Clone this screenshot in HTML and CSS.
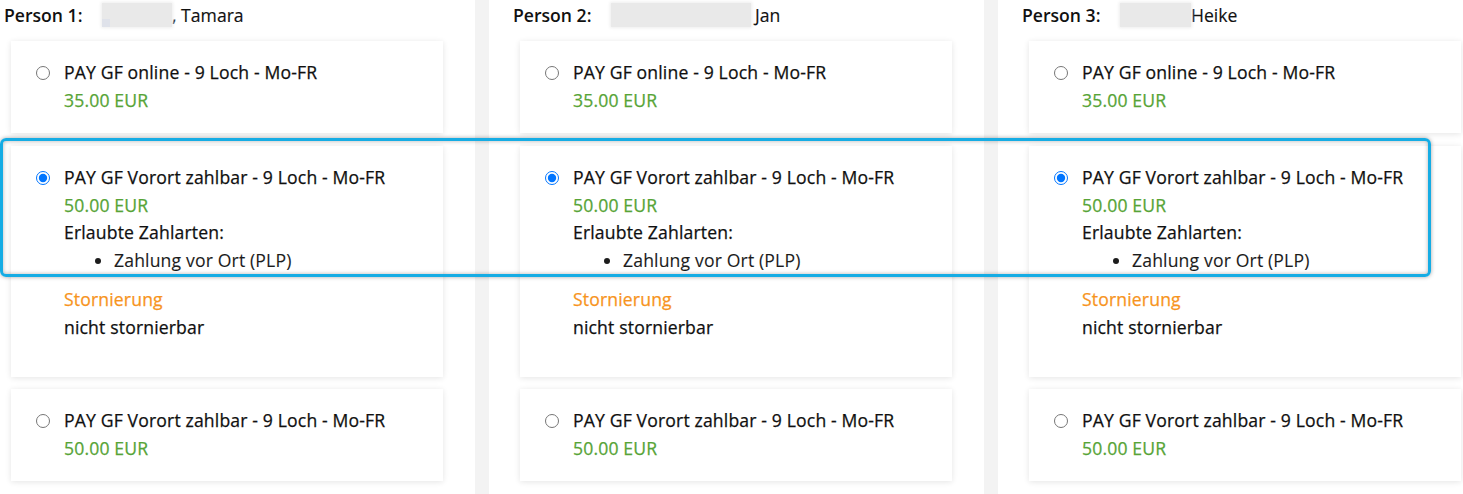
FILE: index.html
```html
<!DOCTYPE html>
<html lang="de">
<head>
<meta charset="utf-8">
<title>Tarifauswahl</title>
<link rel="stylesheet" href="styles.css">
</head>
<body>
<div class="board">
  <section class="col">
    <h2 class="person"><span class="label">Person 1:</span><span class="blur blur-1"><span class="blur-dot"></span></span><span class="name">, Tamara</span></h2>
    <div class="card">
      <input type="radio" name="p1" class="radio">
      <div class="body">
        <div class="title">PAY GF online - 9 Loch - Mo-FR</div>
        <div class="price">35.00 EUR</div>
      </div>
    </div>
    <div class="card">
      <input type="radio" name="p1" class="radio" checked>
      <div class="body">
        <div class="title">PAY GF Vorort zahlbar - 9 Loch - Mo-FR</div>
        <div class="price">50.00 EUR</div>
        <div class="methods">Erlaubte Zahlarten:</div>
        <ul class="method-list"><li>Zahlung vor Ort (PLP)</li></ul>
        <div class="storno">Stornierung</div>
        <div class="storno-text">nicht stornierbar</div>
      </div>
    </div>
    <div class="card">
      <input type="radio" name="p1" class="radio">
      <div class="body">
        <div class="title">PAY GF Vorort zahlbar - 9 Loch - Mo-FR</div>
        <div class="price">50.00 EUR</div>
      </div>
    </div>
  </section>
  <div class="sep"></div>
  <section class="col">
    <h2 class="person"><span class="label">Person 2:</span><span class="blur blur-2"></span><span class="name">Jan</span></h2>
    <div class="card">
      <input type="radio" name="p2" class="radio">
      <div class="body">
        <div class="title">PAY GF online - 9 Loch - Mo-FR</div>
        <div class="price">35.00 EUR</div>
      </div>
    </div>
    <div class="card">
      <input type="radio" name="p2" class="radio" checked>
      <div class="body">
        <div class="title">PAY GF Vorort zahlbar - 9 Loch - Mo-FR</div>
        <div class="price">50.00 EUR</div>
        <div class="methods">Erlaubte Zahlarten:</div>
        <ul class="method-list"><li>Zahlung vor Ort (PLP)</li></ul>
        <div class="storno">Stornierung</div>
        <div class="storno-text">nicht stornierbar</div>
      </div>
    </div>
    <div class="card">
      <input type="radio" name="p2" class="radio">
      <div class="body">
        <div class="title">PAY GF Vorort zahlbar - 9 Loch - Mo-FR</div>
        <div class="price">50.00 EUR</div>
      </div>
    </div>
  </section>
  <div class="sep"></div>
  <section class="col">
    <h2 class="person"><span class="label">Person 3:</span><span class="blur blur-3"></span><span class="name">Heike</span></h2>
    <div class="card">
      <input type="radio" name="p3" class="radio">
      <div class="body">
        <div class="title">PAY GF online - 9 Loch - Mo-FR</div>
        <div class="price">35.00 EUR</div>
      </div>
    </div>
    <div class="card">
      <input type="radio" name="p3" class="radio" checked>
      <div class="body">
        <div class="title">PAY GF Vorort zahlbar - 9 Loch - Mo-FR</div>
        <div class="price">50.00 EUR</div>
        <div class="methods">Erlaubte Zahlarten:</div>
        <ul class="method-list"><li>Zahlung vor Ort (PLP)</li></ul>
        <div class="storno">Stornierung</div>
        <div class="storno-text">nicht stornierbar</div>
      </div>
    </div>
    <div class="card">
      <input type="radio" name="p3" class="radio">
      <div class="body">
        <div class="title">PAY GF Vorort zahlbar - 9 Loch - Mo-FR</div>
        <div class="price">50.00 EUR</div>
      </div>
    </div>
  </section>
</div>
<div class="highlight"></div>
</body>
</html>
```

FILE: styles.css
```css
html, body {
  margin: 0;
  padding: 0;
  background: #ffffff;
}
body {
  position: relative;
  width: 1463px;
  height: 494px;
  overflow: hidden;
  font-family: "Open Sans", "Noto Sans", sans-serif;
  font-size: 17.6px;
  color: #1b1b1b;
}
.board {
  display: flex;
  margin-left: -20px;
  height: 494px;
}
.col {
  flex: 0 0 495px;
  box-sizing: border-box;
  padding-top: 3px;
}
.sep {
  flex: 0 0 14px;
  background: #f3f3f3;
}
.person {
  display: flex;
  align-items: center;
  margin: 0 0 14px 0;
  padding-left: 24px;
  height: 24px;
  font-size: 17.6px;
  line-height: 24px;
  font-weight: 400;
  color: #111;
}
.label {
  width: 98px;
  font-weight: 600;
  flex: none;
}
.name {
  -webkit-text-stroke: 0.15px currentColor;
}
.blur {
  position: relative;
  display: block;
  height: 24px;
  background: #e9e9e9;
  box-shadow: 0 0 3px 1px #ededed;
  flex: none;
}
.blur-1 { width: 70px; }
.blur-2 { width: 140px; margin-right: 4px; }
.blur-3 { width: 71px; }
.blur-dot {
  position: absolute;
  left: 0;
  bottom: 0;
  width: 8px;
  height: 8px;
  background: #dfe2ea;
}
.card {
  display: flex;
  align-items: flex-start;
  gap: 14px;
  width: 432px;
  box-sizing: border-box;
  margin: 0 0 13px 31px;
  padding: 18px 16px 19px 25px;
  background: #fff;
  box-shadow: 0 1px 6px rgba(0, 0, 0, 0.11);
}
.card:nth-of-type(2) {
  margin-bottom: 12px;
}
.radio {
  flex: none;
  width: 14px;
  height: 14px;
  margin: 7px 0 0 0;
}
.body {
  line-height: 27.5px;
  letter-spacing: 0.15px;
  -webkit-text-stroke: 0.25px currentColor;
}
.title {
  color: #101010;
}
.price {
  color: #57a437;
}
.methods {
  color: #101010;
}
.method-list {
  margin: 0 0 12px 0;
  padding-left: 50px;
  color: #1c1c1c;
  -webkit-text-stroke: 0.1px currentColor;
}
.storno {
  color: #f7941d;
}
.storno-text {
  color: #101010;
  margin-bottom: 17px;
}
.highlight {
  position: absolute;
  left: 0;
  top: 138px;
  width: 1431px;
  height: 139px;
  box-sizing: border-box;
  border: 3px solid #15ace4;
  border-radius: 6px;
  box-shadow: 0 0 4px rgba(0, 0, 0, 0.35), inset 0 0 4px rgba(0, 0, 0, 0.3);
  pointer-events: none;
}
```
